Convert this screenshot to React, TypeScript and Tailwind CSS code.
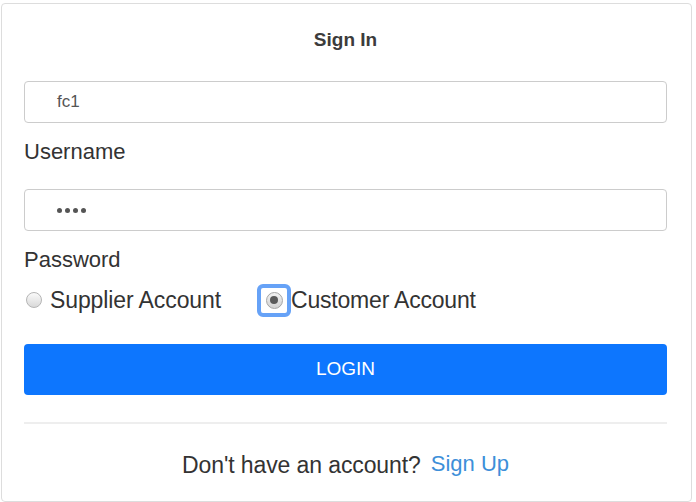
export default function App() {
  return (
    <div
      className="h-[502px] w-[696px] overflow-hidden bg-white pt-[3px] pl-[1px] pr-[4px]"
      style={{ fontFamily: '"Liberation Sans", Arial, sans-serif' }}
    >
      <div className="h-[499px] rounded-[4px] border border-[#dddddd] pl-[22px] pr-[24px] pt-[25px]">
        {/* Title */}
        <h2 className="h-[22px] text-center text-[19px] font-bold leading-[22px] text-[#3c3c3c]">
          Sign In
        </h2>

        {/* Username */}
        <div className="mt-[30px] flex h-[42px] items-center rounded-[4px] border border-[#cccccc] pl-[32px] text-[17px] text-[#555555]">
          fc1
        </div>
        <label className="mt-[16px] block h-[26px] text-[22px] leading-[26px] text-[#333333]">
          Username
        </label>

        {/* Password */}
        <div className="mt-[24px] flex h-[42px] items-center gap-[3px] rounded-[4px] border border-[#cccccc] pl-[32px]">
          <span className="h-[5px] w-[5px] rounded-full bg-[#555555]" />
          <span className="h-[5px] w-[5px] rounded-full bg-[#555555]" />
          <span className="h-[5px] w-[5px] rounded-full bg-[#555555]" />
          <span className="h-[5px] w-[5px] rounded-full bg-[#555555]" />
        </div>
        <label className="mt-[16px] block h-[26px] text-[22px] leading-[26px] text-[#333333]">
          Password
        </label>

        {/* Account type */}
        <div className="mt-[14px] flex h-[26px] items-center text-[23px] leading-[26px] text-[#333333]">
          <span className="ml-[2px] h-[16px] w-[16px] rounded-full border border-[#b5b5b5] bg-gradient-to-b from-[#fafafa] to-[#d9d9d9]" />
          <span className="ml-[8px] tracking-[-0.1px]">Supplier Account</span>
          <span className="ml-[36px] flex h-[33px] w-[34px] items-center justify-center rounded-[6px] border-4 border-[#66a2f7]">
            <span className="flex h-[17px] w-[17px] items-center justify-center rounded-full border border-[#a5a5a5] bg-gradient-to-b from-[#f2f2f2] to-[#d2d2d2]">
              <span className="h-[8px] w-[8px] rounded-full bg-[#5a5a5a]" />
            </span>
          </span>
          <span className="tracking-[-0.2px]">Customer Account</span>
        </div>

        {/* Login */}
        <button className="mt-[31px] flex h-[51px] w-full items-center justify-center rounded-[4px] bg-[#0d76fe] text-[19px] text-white">
          LOGIN
        </button>

        <div className="mt-[27px] h-[2px] bg-[#eeeeee]" />

        {/* Footer */}
        <div className="mt-[28px] flex h-[26px] items-center justify-center text-[23px] leading-[26px] text-[#333333]">
          <span className="tracking-[-0.1px]">Don't have an account?</span>
          <a href="#" className="ml-[10px] -mt-[3px] text-[22px] text-[#3d8fd9]">
            Sign Up
          </a>
        </div>
      </div>
    </div>
  )
}
